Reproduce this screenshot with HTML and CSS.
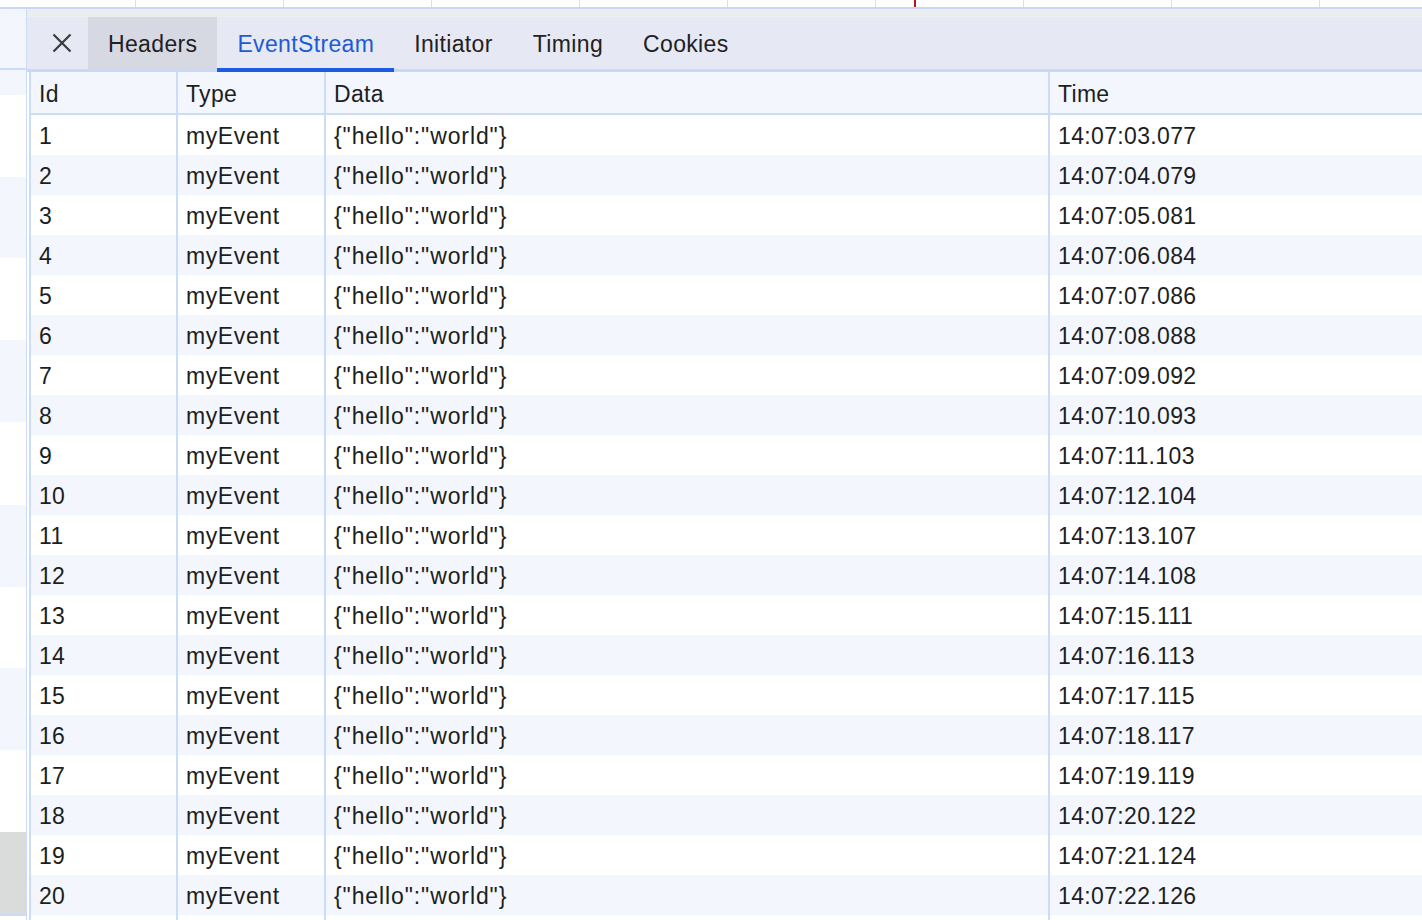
FILE: index.html
```html
<!DOCTYPE html>
<html>
<head>
<meta charset="utf-8">
<link rel="stylesheet" href="styles.css">
</head>
<body>
<div class="timeline">
  <div class="tick first"></div><div class="tick"></div><div class="tick"></div><div class="tick"></div><div class="tick"></div><div class="tick"></div><div class="tick"></div><div class="tick"></div><div class="tick"></div><div class="tick"></div>
  <div class="marker"></div>
</div>
<div class="main">
  <div class="list">
    <div class="band b-top light"></div>
    <div class="band b-head light"></div>
    <div class="band h82"></div>
    <div class="band h81 light"></div>
    <div class="band h82"></div>
    <div class="band h82 light"></div>
    <div class="band h83"></div>
    <div class="band h82 light"></div>
    <div class="band h81"></div>
    <div class="band h82 light"></div>
    <div class="band h82"></div>
    <div class="band h84 gray"></div>
    <div class="band rest"></div>
  </div>
  <div class="panel">
    <div class="toolbar-gap"></div>
    <div class="tabbar">
      <button class="close" aria-label="Close">
        <svg width="20" height="20" viewBox="0 0 20 20"><path d="M1.5 1.5 L18.5 18.5 M18.5 1.5 L1.5 18.5" stroke="#3b3b3d" stroke-width="2.2" fill="none" stroke-linecap="butt"/></svg>
      </button>
      <div class="tab hovered">Headers</div>
      <div class="tab active">EventStream</div>
      <div class="tab">Initiator</div>
      <div class="tab">Timing</div>
      <div class="tab">Cookies</div>
    </div>
    <div class="table">
      <div class="row head"><div class="c id">Id</div><div class="c type">Type</div><div class="c data">Data</div><div class="c time">Time</div></div>
      <div class="row"><div class="c id">1</div><div class="c type">myEvent</div><div class="c data">{"hello":"world"}</div><div class="c time">14:07:03.077</div></div>
      <div class="row alt"><div class="c id">2</div><div class="c type">myEvent</div><div class="c data">{"hello":"world"}</div><div class="c time">14:07:04.079</div></div>
      <div class="row"><div class="c id">3</div><div class="c type">myEvent</div><div class="c data">{"hello":"world"}</div><div class="c time">14:07:05.081</div></div>
      <div class="row alt"><div class="c id">4</div><div class="c type">myEvent</div><div class="c data">{"hello":"world"}</div><div class="c time">14:07:06.084</div></div>
      <div class="row"><div class="c id">5</div><div class="c type">myEvent</div><div class="c data">{"hello":"world"}</div><div class="c time">14:07:07.086</div></div>
      <div class="row alt"><div class="c id">6</div><div class="c type">myEvent</div><div class="c data">{"hello":"world"}</div><div class="c time">14:07:08.088</div></div>
      <div class="row"><div class="c id">7</div><div class="c type">myEvent</div><div class="c data">{"hello":"world"}</div><div class="c time">14:07:09.092</div></div>
      <div class="row alt"><div class="c id">8</div><div class="c type">myEvent</div><div class="c data">{"hello":"world"}</div><div class="c time">14:07:10.093</div></div>
      <div class="row"><div class="c id">9</div><div class="c type">myEvent</div><div class="c data">{"hello":"world"}</div><div class="c time">14:07:11.103</div></div>
      <div class="row alt"><div class="c id">10</div><div class="c type">myEvent</div><div class="c data">{"hello":"world"}</div><div class="c time">14:07:12.104</div></div>
      <div class="row"><div class="c id">11</div><div class="c type">myEvent</div><div class="c data">{"hello":"world"}</div><div class="c time">14:07:13.107</div></div>
      <div class="row alt"><div class="c id">12</div><div class="c type">myEvent</div><div class="c data">{"hello":"world"}</div><div class="c time">14:07:14.108</div></div>
      <div class="row"><div class="c id">13</div><div class="c type">myEvent</div><div class="c data">{"hello":"world"}</div><div class="c time">14:07:15.111</div></div>
      <div class="row alt"><div class="c id">14</div><div class="c type">myEvent</div><div class="c data">{"hello":"world"}</div><div class="c time">14:07:16.113</div></div>
      <div class="row"><div class="c id">15</div><div class="c type">myEvent</div><div class="c data">{"hello":"world"}</div><div class="c time">14:07:17.115</div></div>
      <div class="row alt"><div class="c id">16</div><div class="c type">myEvent</div><div class="c data">{"hello":"world"}</div><div class="c time">14:07:18.117</div></div>
      <div class="row"><div class="c id">17</div><div class="c type">myEvent</div><div class="c data">{"hello":"world"}</div><div class="c time">14:07:19.119</div></div>
      <div class="row alt"><div class="c id">18</div><div class="c type">myEvent</div><div class="c data">{"hello":"world"}</div><div class="c time">14:07:20.122</div></div>
      <div class="row"><div class="c id">19</div><div class="c type">myEvent</div><div class="c data">{"hello":"world"}</div><div class="c time">14:07:21.124</div></div>
      <div class="row alt"><div class="c id">20</div><div class="c type">myEvent</div><div class="c data">{"hello":"world"}</div><div class="c time">14:07:22.126</div></div>
      <div class="row filler"><div class="c id"></div><div class="c type"></div><div class="c data"></div><div class="c time"></div></div>
    </div>
  </div>
</div>
</body>
</html>
```
FILE: styles.css
```css
* { box-sizing: border-box; }
html, body {
  margin: 0;
  padding: 0;
  width: 1422px;
  height: 920px;
  overflow: hidden;
  background: #ffffff;
  font-family: "Liberation Sans", Arial, Helvetica, sans-serif;
  color: #1c1e21;
}

.timeline {
  position: relative;
  display: flex;
  height: 9px;
  border-bottom: 2px solid #c8d9f7;
  background: #ffffff;
}
.tick {
  flex: 0 0 148px;
  border-right: 1px solid #d3e0f8;
}
.tick.first { flex-basis: 136px; }
.marker {
  position: absolute;
  left: 914px;
  top: 0;
  width: 2px;
  height: 7px;
  background: #b3181b;
}

.main {
  display: flex;
  height: 911px;
  overflow: hidden;
}

.list {
  flex: 0 0 27px;
  display: flex;
  flex-direction: column;
  border-right: 1px solid #cbdbf8;
}
.band { flex: 0 0 auto; background: #ffffff; }
.band.light { background: #f3f6fd; }
.band.gray { background: #d9dcda; }
.b-top { height: 61px; border-bottom: 2px solid #cbdbf8; }
.b-head { height: 25px; }
.h81 { height: 81px; }
.h82 { height: 82px; }
.h83 { height: 83px; }
.h84 { height: 84px; border-bottom: 2px solid #cbdbf8; }
.rest { flex: 1 1 auto; }

.panel {
  flex: 1 1 auto;
  display: flex;
  flex-direction: column;
  min-width: 0;
  overflow: hidden;
}
.toolbar-gap {
  flex: 0 0 8px;
  background: #eaeef0;
}
.tabbar {
  flex: 0 0 55px;
  display: flex;
  align-items: stretch;
  background: #e6e9f3;
  border-bottom: 3px solid #c8d9f7;
}
.close {
  width: 61px;
  border: 0;
  padding: 0;
  margin: 0;
  background: transparent;
  display: flex;
  align-items: center;
  justify-content: center;
  padding-left: 8px;
}
.tab {
  display: flex;
  align-items: center;
  padding: 2px 20px 0;
  font-size: 23px;
  letter-spacing: 0.35px;
  color: #1f2124;
}
.tab.hovered { background: #d6d9e1; }
.tab.active {
  color: #1c5bd6;
  border-bottom: 4px solid #1b5ae2;
  margin-bottom: -3px;
  padding-top: 3px;
}

.table {
  flex: 1 1 auto;
  margin-left: 2px;
  border-left: 2px solid #cbdbf8;
  display: flex;
  flex-direction: column;
}
.row {
  flex: 0 0 40px;
  display: grid;
  grid-template-columns: 147px 148px 724px 1fr;
  background: #ffffff;
}
.row.alt { background: #f3f6fd; }
.row.head {
  flex-basis: 43px;
  background: #f3f6fd;
  border-bottom: 2px solid #cbdbf8;
}
.c {
  display: flex;
  align-items: center;
  padding: 2px 0 0 8px;
  font-size: 23px;
  letter-spacing: 0.3px;
  white-space: nowrap;
  border-right: 2px solid #cbdbf8;
}
.c.type { letter-spacing: 0.6px; }
.c.time { border-right: 0; letter-spacing: 0.35px; }
.c.data { letter-spacing: 0.9px; }
.row.head .c { padding-top: 4px; letter-spacing: 0.3px; }
```
